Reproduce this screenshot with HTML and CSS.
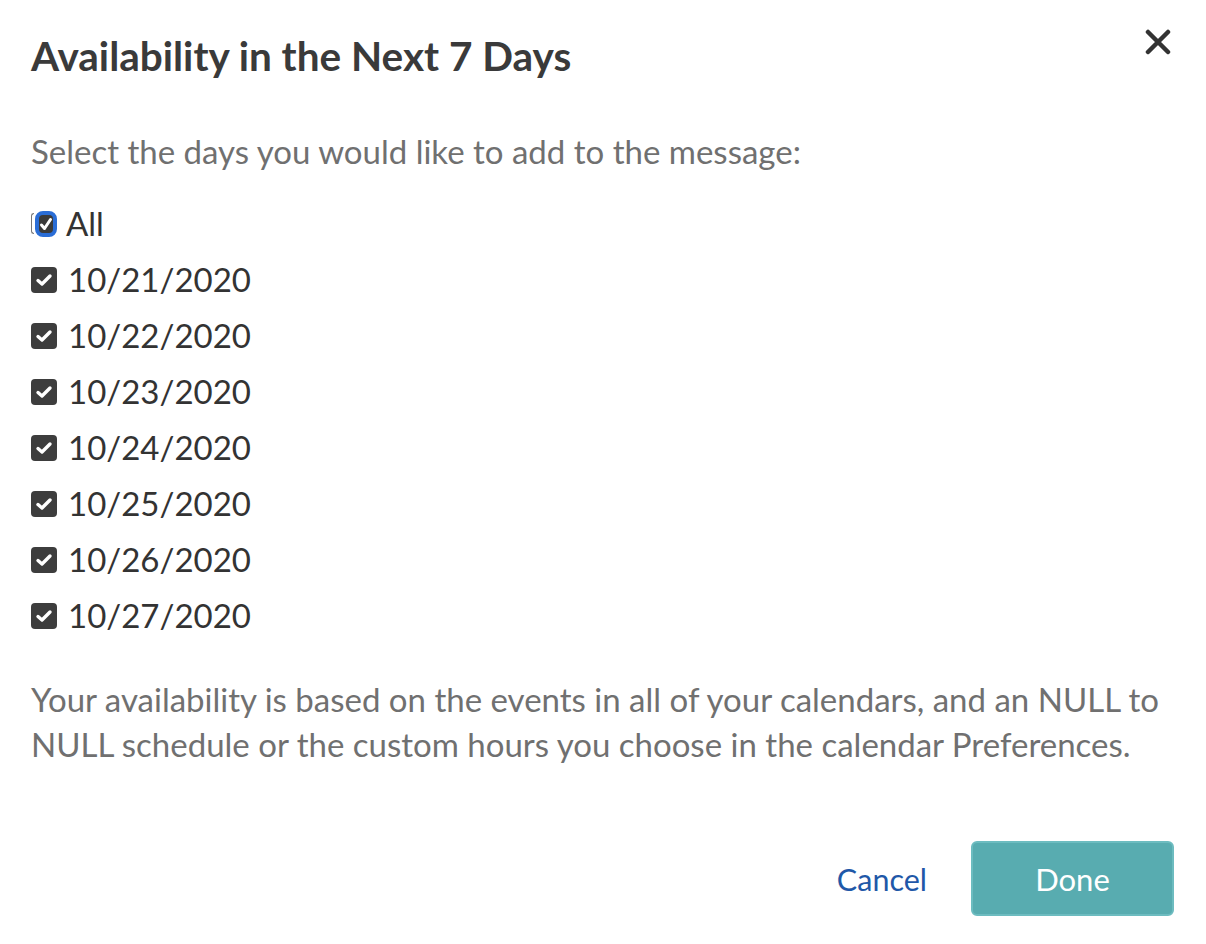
FILE: index.html
```html
<!DOCTYPE html>
<html>
<head>
<meta charset="utf-8">
<link rel="stylesheet" href="styles.css">
</head>
<body>
<div class="dialog">
  <div class="header">
    <h1 class="title">Availability in the Next 7 Days</h1>
    <button class="close" aria-label="Close">
      <svg width="26" height="26" viewBox="0 0 26 26"><path d="M3 3 L23 23 M23 3 L3 23" stroke="#333" stroke-width="4.5" stroke-linecap="round"/></svg>
    </button>
  </div>
  <p class="intro">Select the days you would like to add to the message:</p>
  <ul class="days">
    <li class="day all">
      <span class="cb-wrap"><span class="paren"></span><span class="cb focus"><svg width="14" height="18" viewBox="0 0 14 18"><path d="M2.5 10 L5.5 13.5 L11.5 4.5" stroke="#fff" stroke-width="3" fill="none" stroke-linecap="round" stroke-linejoin="round"/></svg></span></span>
      <span class="label">All</span>
    </li>
    <li class="day"><span class="cb"><svg width="20" height="20" viewBox="0 0 20 20"><path d="M4 10.5 L8 14 L16 6" stroke="#fff" stroke-width="3.4" fill="none" stroke-linecap="round" stroke-linejoin="round"/></svg></span><span class="label">10/21/2020</span></li>
    <li class="day"><span class="cb"><svg width="20" height="20" viewBox="0 0 20 20"><path d="M4 10.5 L8 14 L16 6" stroke="#fff" stroke-width="3.4" fill="none" stroke-linecap="round" stroke-linejoin="round"/></svg></span><span class="label">10/22/2020</span></li>
    <li class="day"><span class="cb"><svg width="20" height="20" viewBox="0 0 20 20"><path d="M4 10.5 L8 14 L16 6" stroke="#fff" stroke-width="3.4" fill="none" stroke-linecap="round" stroke-linejoin="round"/></svg></span><span class="label">10/23/2020</span></li>
    <li class="day"><span class="cb"><svg width="20" height="20" viewBox="0 0 20 20"><path d="M4 10.5 L8 14 L16 6" stroke="#fff" stroke-width="3.4" fill="none" stroke-linecap="round" stroke-linejoin="round"/></svg></span><span class="label">10/24/2020</span></li>
    <li class="day"><span class="cb"><svg width="20" height="20" viewBox="0 0 20 20"><path d="M4 10.5 L8 14 L16 6" stroke="#fff" stroke-width="3.4" fill="none" stroke-linecap="round" stroke-linejoin="round"/></svg></span><span class="label">10/25/2020</span></li>
    <li class="day"><span class="cb"><svg width="20" height="20" viewBox="0 0 20 20"><path d="M4 10.5 L8 14 L16 6" stroke="#fff" stroke-width="3.4" fill="none" stroke-linecap="round" stroke-linejoin="round"/></svg></span><span class="label">10/26/2020</span></li>
    <li class="day"><span class="cb"><svg width="20" height="20" viewBox="0 0 20 20"><path d="M4 10.5 L8 14 L16 6" stroke="#fff" stroke-width="3.4" fill="none" stroke-linecap="round" stroke-linejoin="round"/></svg></span><span class="label">10/27/2020</span></li>
  </ul>
  <p class="note">Your availability is based on the events in all of your calendars, and an NULL to NULL schedule or the custom hours you choose in the calendar Preferences.</p>
  <div class="footer">
    <button class="cancel">Cancel</button>
    <button class="done">Done</button>
  </div>
</div>
</body>
</html>
```
FILE: styles.css
```css
* { box-sizing: border-box; }
html, body { margin: 0; padding: 0; background: #fff; }
body { font-family: Lato, "Open Sans", sans-serif; color: #333; width: 1206px; height: 944px; overflow: hidden; }
.dialog { padding: 26px 30px 0 31px; }
.header { display: flex; justify-content: space-between; align-items: flex-start; }
.title { margin: 7px 0 0 0; font-size: 40.5px; font-weight: 700; color: #3a3a3a; line-height: 46px; }
.close { background: none; border: 0; padding: 0; margin: 3px 5px 0 0; width: 26px; height: 26px; cursor: pointer; }
.intro { margin: 50px 0 0 0; font-size: 33px; line-height: 44px; color: #707070; }
.days { list-style: none; margin: 28px 0 0 0; padding: 0; display: flex; flex-direction: column; gap: 11px; }
.day { display: flex; align-items: center; height: 45px; gap: 11px; }
.label { font-size: 33px; color: #333; line-height: 45px; }
.cb { width: 26px; height: 26px; border-radius: 4px; background: #3d3d3d; display: flex; align-items: center; justify-content: center; flex-shrink: 0; }
.cb-wrap { display: flex; align-items: center; width: 26px; }
.paren { width: 4px; height: 21px; border: 1.5px solid #777; border-right: 0; border-radius: 4px 0 0 4px; margin-right: 1px; }
.cb.focus { width: 22px; height: 26px; border: 4px solid #2a6dd6; border-radius: 8px; background: #3a3a3a; }
.day.all .label { margin-left: -2px; }
.note { margin: 39px 0 0 0; font-size: 33px; line-height: 45px; color: #707070; }
.footer { display: flex; justify-content: flex-end; align-items: center; margin-top: 74px; gap: 44px; padding-right: 2px; }
.cancel { background: none; border: 0; padding: 0; font-family: inherit; font-size: 30.5px; color: #1f58a8; cursor: pointer; }
.done { width: 203px; height: 75px; background: #58acb0; border: 2px solid #6dbcc0; border-radius: 6px; color: #fff; font-family: inherit; font-size: 31px; cursor: pointer; }
```
